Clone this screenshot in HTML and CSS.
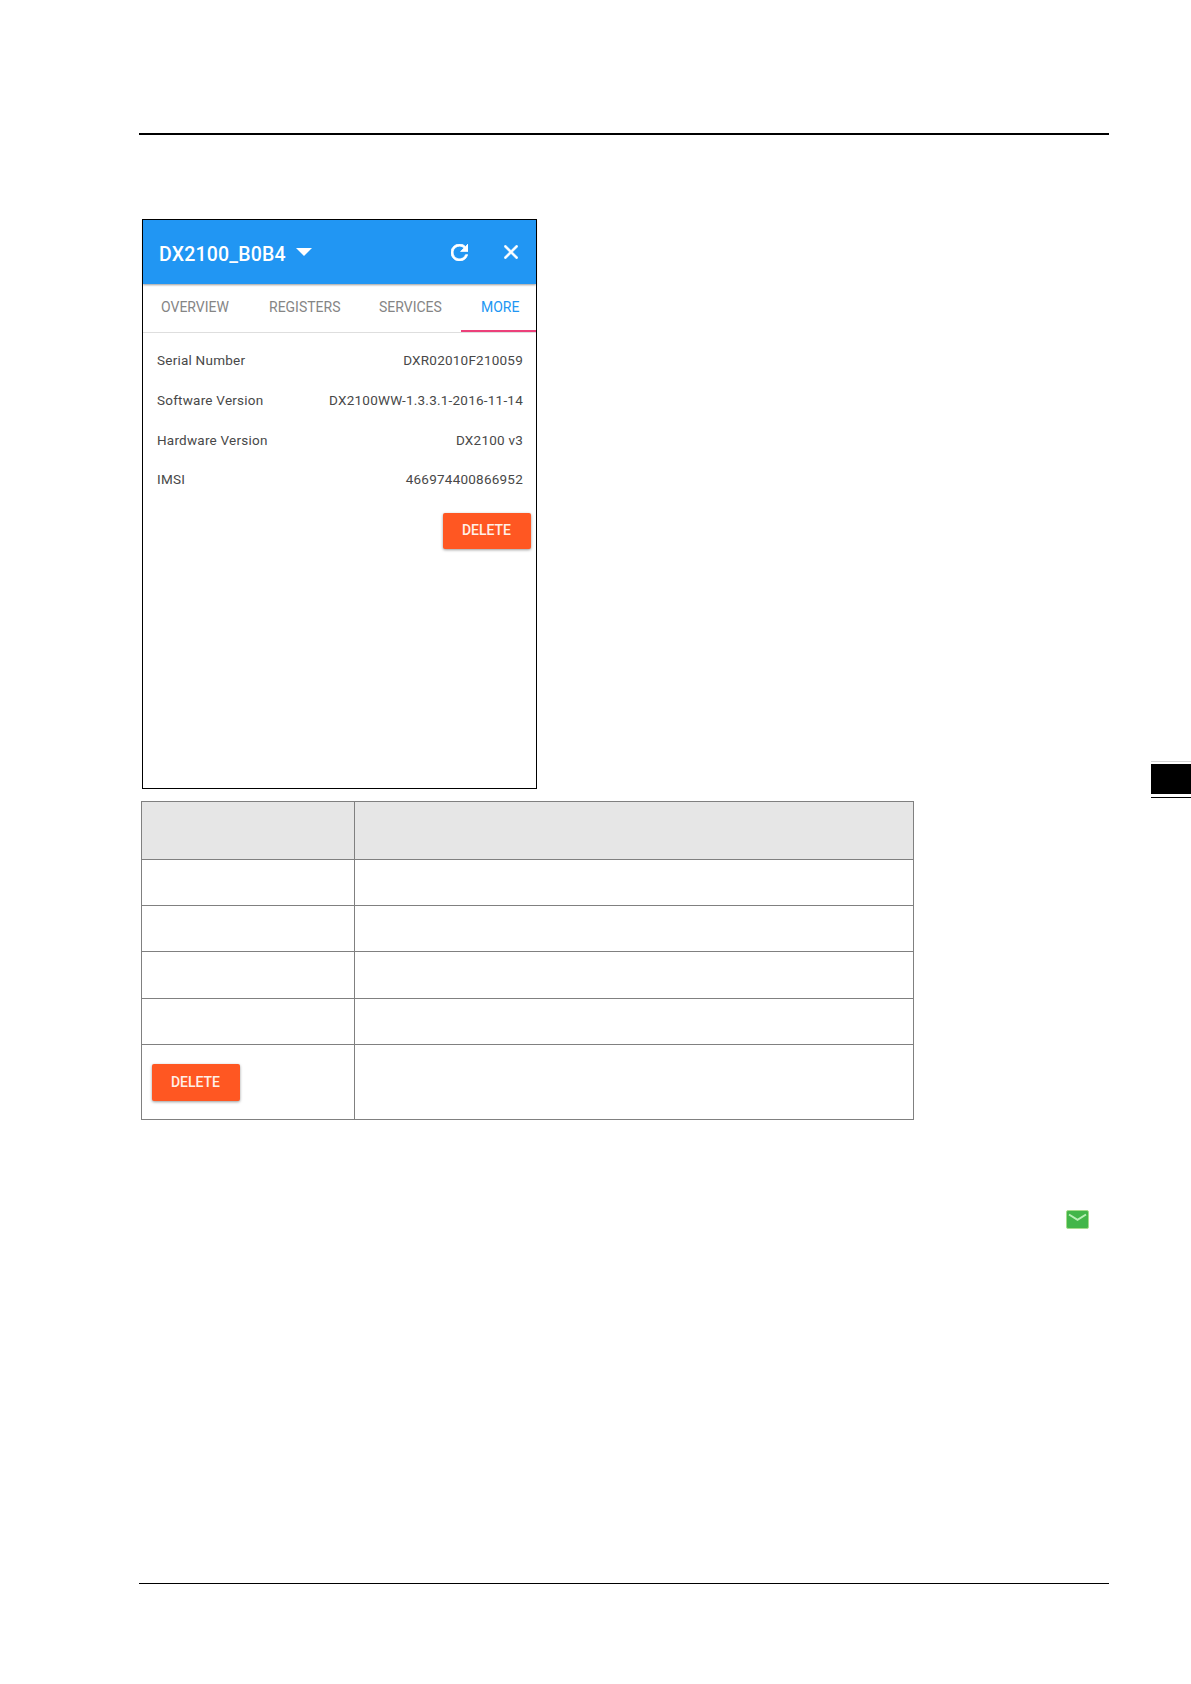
FILE: index.html
```html
<!DOCTYPE html>
<html lang="en">
<head>
    <meta charset="UTF-8">
    <meta name="viewport" content="width=device-width, initial-scale=1.0">
    <title>DX2100_B0B4</title>
    <link rel="stylesheet" href="styles.css">
</head>
<body>

    <div class="page">
        <main class="content">

            <div class="phone">
                <header class="app-bar">
                    <span class="device">DX2100_B0B4</span>
                    <span class="caret"></span>
                    <svg class="refresh" viewBox="4 4 16 16" width="17" height="17">
                        <path fill="#fff" stroke="#fff" stroke-width="0.7" d="M17.65 6.35A7.96 7.96 0 0 0 12 4a8 8 0 1 0 7.73 10h-2.08A6 6 0 1 1 12 6c1.66 0 3.14.69 4.22 1.78L13 11h7V4z"/>
                    </svg>
                    <svg class="close" viewBox="5 5 14 14" width="14" height="14">
                        <path fill="#fff" stroke="#fff" stroke-width="0.7" d="M19 6.41 17.59 5 12 10.59 6.41 5 5 6.41 10.59 12 5 17.59 6.41 19 12 13.41 17.59 19 19 17.59 13.41 12z"/>
                    </svg>
                </header>

                <nav class="tabs">
                    <span class="tab overview">OVERVIEW</span>
                    <span class="tab registers">REGISTERS</span>
                    <span class="tab services">SERVICES</span>
                    <span class="tab active">MORE</span>
                </nav>

                <div class="info">
                    <div class="row"><span>Serial Number</span><span>DXR02010F210059</span></div>
                    <div class="row"><span>Software Version</span><span>DX2100WW-1.3.3.1-2016-11-14</span></div>
                    <div class="row"><span>Hardware Version</span><span>DX2100 v3</span></div>
                    <div class="row"><span>IMSI</span><span>466974400866952</span></div>
                </div>

                <button class="delete-btn">DELETE</button>
            </div>

            <table class="desc">
                <tr class="head"><th></th><th></th></tr>
                <tr><td></td><td></td></tr>
                <tr><td></td><td></td></tr>
                <tr class="tall"><td></td><td></td></tr>
                <tr><td></td><td></td></tr>
                <tr class="last"><td><button class="delete-btn">DELETE</button></td><td></td></tr>
            </table>

            <svg class="mail" viewBox="0 0 23 19" width="23" height="19">
                <rect x="0.5" y="0.5" width="22" height="18" rx="1.5" fill="#43b649" stroke="#a6dc8c"/>
                <path d="M3 4.5l8.5 5.3L20 4.5" fill="none" stroke="#b9efb5" stroke-width="2"/>
            </svg>
        </main>

        <!-- chapter marker on the page edge -->
        <aside class="edge">
            <div class="edge-tab"></div>
        </aside>
    </div>

</body>
</html>
```
FILE: styles.css
```css
* {
    box-sizing: border-box;
}

body {
    margin: 0;
    background-color: #fff;
    font-family: Roboto, "Liberation Sans", sans-serif;
}

.page {
    display: flex;
    justify-content: space-between;
    height: 1684px;
    padding: 133px 0 0 139px;
    overflow: hidden;
}

.content {
    display: flex;
    flex-direction: column;
    align-items: flex-start;
    width: 970px;
    height: 1451px;
    padding: 84px 0 0 2px;
    border-top: 2px solid #000;
    border-bottom: 1px solid #000;
}

/* phone screen */
.phone {
    display: flex;
    flex-direction: column;
    width: 395px;
    height: 570px;
    margin-left: 1px;
    border: 1px solid #000;
}

.app-bar {
    display: flex;
    flex-shrink: 0;
    align-items: center;
    height: 64px;
    padding: 0 18px 0 16px;
    background-color: #2196f3;
    box-shadow: 0 1px 2px rgba(0, 0, 0, 0.4);
    color: #fff;
}

.device {
    width: 128px;
    padding-top: 5px;
    font-size: 19.5px;
    font-weight: 500;
    letter-spacing: 0.2px;
    line-height: 24px;
    white-space: nowrap;
}

.caret {
    margin-left: 9px;
    border: 8px solid transparent;
    border-top-color: #fff;
    border-bottom: 0;
}

.refresh {
    margin-left: auto;
}

.close {
    margin-left: 36px;
}

.tabs {
    display: flex;
    flex-shrink: 0;
    height: 49px;
    border-bottom: 1px solid #dedede;
    font-size: 14px;
    line-height: 46px;
    color: #858585;
}

.tab {
    white-space: nowrap;
}

.overview {
    width: 126px;
    padding-left: 18px;
}

.registers {
    width: 110px;
}

.services {
    width: 82px;
}

.tab.active {
    flex: 1;
    height: 48px;
    padding-left: 20px;
    border-bottom: 2px solid #ec407a;
    color: #2196f3;
}

.info {
    padding: 7px 13px 0 14px;
    font-size: 13.5px;
    letter-spacing: 0.23px;
    color: #484848;
}

.row {
    display: flex;
    justify-content: space-between;
    height: 40px;
    line-height: 40px;
}

.row:last-child {
    height: 39px;
    line-height: 38px;
}

.delete-btn {
    width: 88px;
    height: 36px;
    padding: 0 1px 0 0;
    border: 0;
    border-radius: 2px;
    background-color: #ff5722;
    box-shadow: 0 1px 3px rgba(0, 0, 0, 0.4);
    font-family: inherit;
    font-size: 14px;
    font-weight: 500;
    line-height: 36px;
    color: #fff0e8;
}

.phone .delete-btn {
    margin: 14px 5px 0 auto;
    line-height: 35px;
    padding-bottom: 1px;
}

/* description table */
.desc {
    width: 773px;
    margin-top: 12px;
    border-collapse: collapse;
    table-layout: fixed;
}

.desc th,
.desc td {
    height: 46px;
    padding: 0;
    border: 1px solid #808080;
}

.desc th {
    height: 58px;
    background-color: #e6e6e6;
}

.desc th:first-child {
    width: 213px;
}

.desc .tall td {
    height: 47px;
}

.desc .last td {
    height: 75px;
}

.desc .delete-btn {
    display: block;
    height: 37px;
    margin: 0 0 0 10px;
    padding-bottom: 1px;
}

.mail {
    margin: 90px 0 0 925px;
}

/* page edge */
.edge {
    width: 40px;
    padding-top: 628px;
}

.edge-tab {
    height: 37px;
    border-top: 1px solid #d4d4d4;
    border-bottom: 1px solid #000;
    padding: 2px 0 3px;
    background-color: #000;
    background-clip: content-box;
}
```
